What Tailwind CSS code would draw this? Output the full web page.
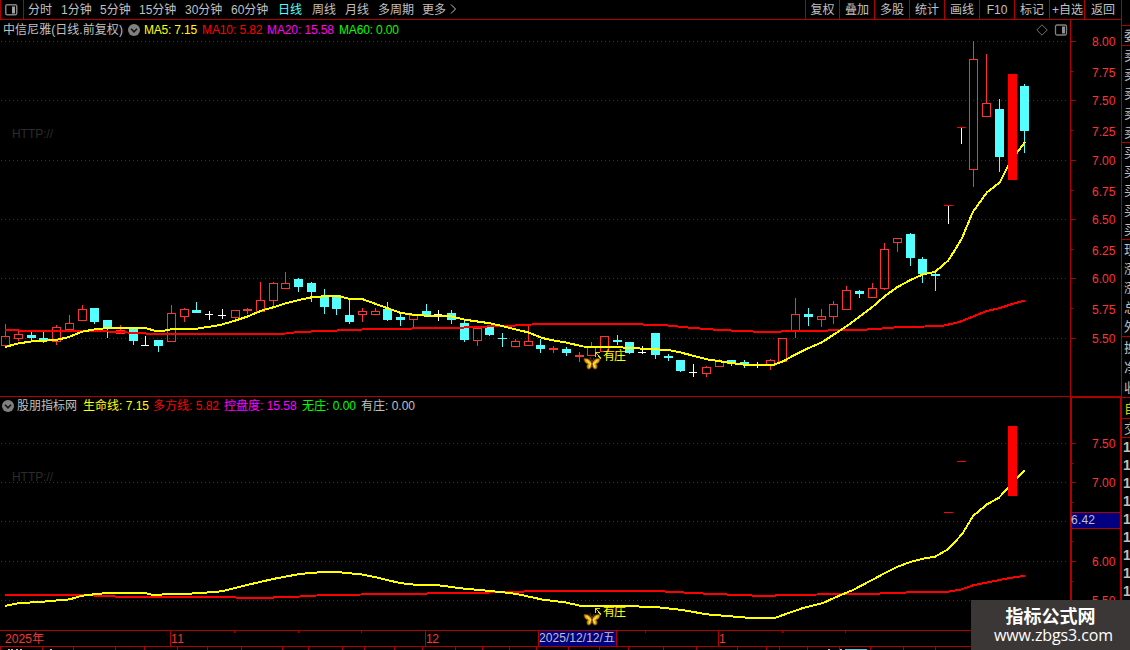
<!DOCTYPE html>
<html lang="zh-CN">
<head>
  <meta charset="UTF-8" />
  <meta name="viewport" content="width=device-width, initial-scale=1" />
  <title>中信尼雅 日线</title>
  <script src="https://cdn.jsdelivr.net/npm/@tailwindcss/browser@4"></script>
</head>
<body class="flex h-[650px] w-[1130px] overflow-hidden bg-black font-['Liberation_Sans','Noto_Sans_CJK_SC',sans-serif] text-[12px] leading-none text-[#c0c0c0]">

  <!-- Shared shapes -->
  <svg class="absolute h-0 w-0">
    <defs>
      <symbol id="collapse" viewBox="0 0 12 12">
        <circle cx="6" cy="6" r="6" fill="#808080" />
        <path d="M3 4.8 6 7.8 9 4.8" fill="none" stroke="#111" stroke-width="1.6" />
      </symbol>
      <g id="butterfly">
        <path d="M8 7C6 3 3 2 0 2.500c0 3 1.500 5 4 5.500-1.500 1-1.500 3.500 0 5 2 .5 3.500-1.500 4-4 .5 2.500 2 4.500 4 4 1.500-1.500 1.500-4 0-5 2.500-.5 4-2.500 4-5.500C13 2 10 3 8 7z" fill="#d9a010" stroke="#7a4308" stroke-width=".8" />
        <path d="M2.500 4 6.500 8 5 11.500M13.500 4l-4 4 1.500 3.500" fill="none" stroke="#ffe23c" stroke-width="1.300" />
        <path d="M8 6v5M8 6 6 1M8 6l2-4" fill="none" stroke="#5a3210" stroke-width="1" />
      </g>
      <path id="pointer" d="M.5 4.500V.5h4M.5.5l5.500 6" fill="none" stroke="#e0e000" stroke-width="1" shape-rendering="crispEdges" />
    </defs>
  </svg>

  <div class="flex w-[1121px] shrink-0 flex-col">

    <!-- Period toolbar -->
    <nav class="flex h-[20px] shrink-0 items-stretch justify-between border-b border-[#b00000] whitespace-nowrap">
      <div class="flex items-center">
        <div class="flex h-full w-[24px] items-center justify-center border-x border-[#b00000] pr-[2px]">
          <svg class="h-[12px] w-[13px]" viewBox="0 0 13 12">
            <rect x=".75" y=".75" width="11" height="10" rx="1.500" fill="none" stroke="#808080" stroke-width="1.500" />
            <rect x="7" y="2.500" width="3" height="7" fill="#a0a0a0" />
          </svg>
        </div>
        <span class="ml-[4px] w-[33px]">分时</span>
        <span class="w-[39px]">1分钟</span>
        <span class="w-[39px]">5分钟</span>
        <span class="w-[46px]">15分钟</span>
        <span class="w-[46px]">30分钟</span>
        <span class="w-[47px]">60分钟</span>
        <span class="w-[34px] text-[#54ffff]">日线</span>
        <span class="w-[33px]">周线</span>
        <span class="w-[33px]">月线</span>
        <span class="w-[44px]">多周期</span>
        <span class="w-[28px]">更多</span>
        <svg class="mb-[2px] h-[10px] w-[7px]" viewBox="0 0 7 10"><path d="M1 .5 5.500 5 1 9.500" fill="none" stroke="#c0c0c0" /></svg>
      </div>
      <div class="flex">
        <span class="flex w-[34px] items-center justify-center border-l border-[#b00000]">复权</span>
        <span class="flex w-[35px] items-center justify-center border-l border-[#b00000]">叠加</span>
        <span class="flex w-[35px] items-center justify-center border-l border-[#b00000]">多股</span>
        <span class="flex w-[35px] items-center justify-center border-l border-[#b00000]">统计</span>
        <span class="flex w-[35px] items-center justify-center border-l border-[#b00000]">画线</span>
        <span class="flex w-[35px] items-center justify-center border-l border-[#b00000]">F10</span>
        <span class="flex w-[35px] items-center justify-center border-l border-[#b00000]">标记</span>
        <span class="flex w-[35px] items-center justify-center border-l border-[#b00000] pl-[1px]">+自选</span>
        <span class="flex w-[37px] items-center justify-center border-l border-[#b00000]">返回</span>
      </div>
    </nav>

    <!-- Price panel -->
    <section class="flex h-[376px] shrink-0 flex-col">
      <header class="flex h-[19px] items-center whitespace-nowrap">
        <span class="w-[125px] pl-[3px] tracking-[0.05px]">中信尼雅(日线.前复权)</span>
        <svg class="ml-[3px] h-[12px] w-[12px]"><use href="#collapse" /></svg>
        <span class="ml-[4px] w-[58px] tracking-[-0.2px] text-[#ffff00]">MA5: 7.15</span>
        <span class="w-[65px] tracking-[-0.1px] text-[#ff0000]">MA10: 5.82</span>
        <span class="w-[72px] tracking-[-0.1px] text-[#ff00ff]">MA20: 15.58</span>
        <span class="tracking-[-0.15px] text-[#00ff00]">MA60: 0.00</span>
        <svg class="ml-auto h-[12px] w-[32px]" viewBox="0 0 32 12">
          <path d="M6 .8 11.200 6 6 11.200.8 6z" fill="none" stroke="#707070" />
          <rect x="19.500" y="1" width="11" height="10" rx="1.500" fill="none" stroke="#808080" stroke-width="1.300" />
          <rect x="26" y="2.500" width="3" height="7" fill="#909090" />
        </svg>
        <div class="w-[53px]"></div>
      </header>
      <svg id="price" class="h-[357px] w-[1121px] overflow-visible" viewBox="0 39 1121 357"></svg>
    </section>

    <!-- Indicator panel -->
    <section class="flex h-[234px] shrink-0 flex-col border-t border-[#b00000]">
      <header class="flex h-[17px] items-center whitespace-nowrap">
        <svg class="ml-[2px] h-[12px] w-[12px]"><use href="#collapse" /></svg>
        <span class="ml-[3px] w-[66px]">股朋指标网</span>
        <span class="w-[70px] text-[#ffff00]">生命线: 7.15</span>
        <span class="w-[71px] text-[#ff0000]">多方线: 5.82</span>
        <span class="w-[78px] text-[#ff00ff]">控盘度: 15.58</span>
        <span class="w-[59px] text-[#00ff00]">无庄: 0.00</span>
        <span>有庄: 0.00</span>
      </header>
      <svg id="indicator" class="h-[216px] w-[1121px] overflow-visible" viewBox="0 414 1121 216"></svg>
    </section>

    <!-- Time axis -->
    <svg id="timeline" class="h-[20px] w-[1121px] shrink-0" viewBox="0 630 1121 20"></svg>
  </div>

  <!-- Quote column, mostly off screen -->
  <aside class="relative flex w-[9px] shrink-0 flex-col overflow-hidden border-l border-[#b00000] text-[13px] whitespace-nowrap">
    <div class="h-[25px] shrink-0"></div>
    <div class="flex h-[20px] shrink-0 items-center border-t border-[#b00000] pl-[2px]">委</div>
    <div class="flex h-[97px] shrink-0 flex-col justify-around border-t border-[#b00000] pl-[2px]">
      <span>卖</span><span>卖</span><span>卖</span><span>卖</span><span>卖</span>
    </div>
    <div class="flex h-[97px] shrink-0 flex-col justify-around border-t border-[#b00000] pl-[2px]">
      <span>买</span><span>买</span><span>买</span><span>买</span><span>买</span>
    </div>
    <div class="flex h-[97px] shrink-0 flex-col justify-around border-t border-[#b00000] pl-[2px]">
      <span>现</span><span>涨</span><span>涨</span><span>总</span><span>外</span>
    </div>
    <div class="flex h-[61px] shrink-0 flex-col justify-around border-t border-[#b00000] pl-[2px]">
      <span>换</span><span>净</span><span>收</span>
    </div>
    <div class="flex h-[21px] shrink-0 items-center border-t border-[#b00000] pl-[2px] text-[#d0d000]">自</div>
    <div class="flex h-[19px] shrink-0 items-center border-t border-[#b00000] pl-[2px]">交</div>
    <div class="flex h-[163px] shrink-0 flex-col justify-around border-t border-[#b00000] pl-px text-[14px] font-bold">
      <span>1</span><span>1</span><span>1</span><span>1</span><span>1</span><span>1</span><span>1</span><span>1</span><span>1</span>
    </div>
  </aside>

  <!-- Site badge -->
  <div class="absolute top-[600px] left-[971px] flex h-[50px] w-[159px] flex-col items-center bg-[#3b3737] pt-[5px] whitespace-nowrap text-white">
    <div class="font-['Noto_Sans_CJK_SC',sans-serif] text-[18px] leading-[20px] font-bold">指标公式网</div>
    <svg class="h-[22px] w-[159px] font-['Open_Sans',sans-serif] text-[16px]" viewBox="0 0 159 22">
      <text x="23" y="16" textLength="119" fill="#fff">www.zbgs3.com</text>
    </svg>
  </div>

  <script>
    const RED = "#b00000", UP = "#ff3232", DOWN = "#54ffff", WHITE = "#ffffff";

    // [kind, high, bodyTop, bodyBottom, low]; u = up, d = down, w = unchanged, t = limit, s = signal
    const candles = [
      ["u",324,336,346,346],["u",331,334,339,341],["d",332,335,338,341],["d",332,338,340,343],
      ["u",325,327,342,345],["u",315,323,330,330],["u",305,309,321,321],["d",308,308,322,324],
      ["d",320,320,329,338],["u",325,330,334,334],["d",329,329,341,345],["w",336,345,346,346],
      ["d",340,340,346,352],["u",305,313,342,342],["u",308,309,317,322],["d",302,310,313,313],
      ["w",311,314,315,320],["w",309,315,316,319],["u",310,310,318,320],["u",308,309,311,314],
      ["u",282,300,312,312],["u",282,283,301,306],["u",272,283,289,289],["d",278,279,287,292],
      ["d",282,283,292,302],["d",289,296,307,314],["d",295,295,309,315],["d",299,315,322,324],
      ["u",308,311,315,322],["u",308,311,315,315],["d",302,309,320,321],["d",312,317,320,326],
      ["u",315,315,320,327],["d",304,311,315,315],["w",310,314,315,321],["d",310,313,320,324],
      ["d",320,323,340,342],["u",328,328,341,346],["d",326,326,335,336],["d",333,338,339,347],
      ["u",339,341,347,347],["u",326,341,346,346],["d",339,345,349,353],["u",346,348,350,353],
      ["d",347,349,353,356],["u",352,355,357,362],["u",342,347,356,356],["u",336,336,352,352],
      ["d",335,340,342,345],["d",342,342,353,354],["w",346,352,353,354],["d",333,333,355,359],
      ["d",354,356,358,361],["d",360,360,371,372],["w",364,372,373,377],["u",366,367,374,377],
      ["u",359,361,367,367],["d",360,360,364,366],["d",360,362,364,368],["w",362,364,365,368],
      ["u",359,360,366,370],["u",338,338,362,362],["u",298,314,331,338],["d",308,314,317,326],
      ["u",309,316,320,327],["u",301,304,317,324],["u",286,290,310,310],["d",290,291,294,298],
      ["u",283,288,298,298],["u",243,249,289,290],["u",238,238,243,252],["d",233,234,258,266],
      ["d",257,259,274,283],["d",273,274,276,291],["t",206,205,206,224],["t",128,127,128,144],
      ["u",41,59,170,187],["u",54,103,117,117],["d",99,109,157,172],["s",74,74,180,180],
      ["d",84,86,131,153]
    ];

    const ma5 = "5,347 18,343.500 31,341.500 56,340 69,337 82,331.700 94,329.500 107,328 145,328 155,330.700 164,330.700 173,329 197,328.700 220,325 235,320.700 247,316.700 263,310 272,307.700 286,303.300 300,299.700 313,297 330,296 338,296 349,298.700 362,299 375,303.700 387,308 400,312.700 413,314.700 427,315.700 450,316 465,319.700 490,323.300 502,326 515,329.300 528,332.300 542,338 553,340.300 565,342.300 583,346.500 615,347 643,348.700 668,350 680,352.300 693,355.700 707,359.300 720,361.300 735,363.500 747,365 773,365 783,361.300 795,354.700 808,348.300 822,342.300 833,335 847,326 859,317 872,307.300 885,296 897,287.300 910,280.300 923,274.300 935,272 948,260.700 955,250 962,238 973,211.700 987,192.300 1000,182.300 1008,166 1017,152.700 1025,142";
    const ma10 = "5,330 18,330 20,331 107,331 109,332 145,333 147,334 260,334 286,333.500 298,332 325,331 350,330 375,329 427,328.300 463,328 465,327 510,326 515,325.500 540,324 630,324 668,325.500 693,328 720,330 757,331.700 780,331.700 785,331 846,330.300 872,329.300 897,327.300 942,326 953,323.500 960,321.700 980,313.700 987,311 1000,308 1012,304 1025,300.500";
    const life = "5,606 18,603.300 43,601.700 70,599.300 82,595.700 97,594 108,593 145,593 152,594.700 172,594.300 197,593.300 222,591.300 235,588 247,585 260,582 273,579 286,576.500 300,574 313,572.700 327,572 340,572.300 362,574.500 375,577 387,580 400,583 413,584.500 440,585.500 463,588.500 490,591 510,593 520,594.700 543,599.700 565,602.300 580,605.700 653,606.700 680,609.700 707,614.300 747,617.700 775,618 783,615 803,608 823,603 840,595.300 853,590 872,580 885,573 897,567 910,562 923,558.700 935,556.700 948,549.300 962,534.300 973,516 987,504.300 999,497.700 1008,487.700 1017,478 1025,470.300";
    const bull = "5,595 93,595 96,596 133,597 235,597 237,598 272,598 275,597 300,596.500 325,595 375,594.300 440,593.300 520,592 528,591 655,591 707,593.700 757,595.700 795,595.300 797,594.700 870,594 897,592.700 930,592 948,591.700 962,589.300 973,585.300 990,582 1008,578.300 1025,575.700";

    const rect = (x, y, w, h, fill) => `<rect x="${x}" y="${y}" width="${w}" height="${h}" fill="${fill}"/>`;
    const text = (x, y, s, len, fill) => `<text x="${x}" y="${y}" textLength="${len}" fill="${fill}">${s}</text>`;
    const line = (pts, color) => `<polyline points="${pts}" fill="none" stroke="${color}" stroke-width="2" stroke-linejoin="round" shape-rendering="crispEdges"/>`;
    const grid = y => `<path d="M1 ${y + .5}H1068" stroke="${RED}" stroke-dasharray="1 3"/>`;

    function candle([kind, high, top, bottom, low], i) {
      const x = Math.round(5.2 + i * 12.74);
      if (kind === "s") return rect(x - 4, top, 9, bottom - top, "#ff0000");
      if (kind === "t") return rect(x - 4, top, 9, 1, "#ff0000") + rect(x, high, 1, low - high, WHITE);
      if (kind === "u") {
        return rect(x, high, 1, top - high, UP) + rect(x, bottom, 1, low - bottom, UP) +
          `<rect x="${x - 3.5}" y="${top + .5}" width="8" height="${bottom - top - 1}" fill="none" stroke="${UP}"/>`;
      }
      const color = kind === "d" ? DOWN : WHITE;
      return rect(x, high, 1, low - high, color) + rect(x - 4, top, kind === "d" ? 9 : 8, bottom - top, color);
    }

    function marker(y) {
      return `<use href="#butterfly" x="584" y="${y + 6}"/><use href="#pointer" x="595" y="${y + 2}"/>` + text(603, y + 10, "有庄", 23, "#ffff00");
    }

    // Price chart
    let out = [41, 100, 160, 219, 278, 338].map(grid).join("");
    out += text(12, 138, "HTTP://", 41, "#2c2c2c");
    out += rect(1070, 20, 1, 376, RED);
    [41, 100, 160, 219, 278, 338].forEach(y => out += rect(1071, y, 5, 1, RED));
    [71, 130, 190, 249, 308].forEach(y => out += rect(1071, y, 2, 1, RED));
    [["8.00",46],["7.75",77],["7.50",105],["7.25",136],["7.00",165],["6.75",196],["6.50",224],["6.25",255],["6.00",283],["5.75",314],["5.50",343]]
      .forEach(([s, y]) => out += text(1092, y, s, 23.5, UP));
    out += candles.map(candle).join("") + line(ma10, "#ff0000") + line(ma5, "#ffff00");
    out += candle(candles[79], 79) + marker(350);
    document.getElementById("price").innerHTML = out;

    // Indicator chart
    out = [443, 482, 521, 561, 600].map(grid).join("");
    out += text(12, 481, "HTTP://", 41, "#2c2c2c");
    out += rect(1070, 396, 2, 234, RED) + rect(1120, 396, 2, 234, RED) + rect(1070, 396, 52, 2, RED);
    [443, 482, 561, 600].forEach(y => out += rect(1072, y, 4, 1, RED));
    [463, 502, 541, 581].forEach(y => out += rect(1072, y, 1, 1, RED));
    [["7.50",448],["7.00",487],["6.00",566],["5.50",605]].forEach(([s, y]) => out += text(1092, y, s, 23.5, UP));
    out += rect(1072, 512, 48, 17, "#000080") + rect(1072, 512, 48, 1, RED) + rect(1072, 528, 48, 1, RED);
    out += text(1071, 524, "6.42", 24, "#c0c0c0");
    out += line(bull, "#ff0000") + line(life, "#ffff00");
    out += rect(944, 512, 9, 1, "#ff0000") + rect(957, 461, 9, 1, "#ff0000") + rect(1008, 426, 9, 70, "#ff0000");
    out += marker(606);
    document.getElementById("indicator").innerHTML = out;

    // Time axis
    out = rect(0, 630, 1121, 1, RED) + rect(0, 646, 1121, 1, RED);
    [170, 425, 718].forEach(x => out += rect(x, 630, 1, 17, RED));
    [234, 298, 361, 645, 782, 845].forEach(x => out += rect(x, 631, 1, 2, RED));
    [0, 42, 73, 115, 144, 177, 207, 241, 282, 308, 342, 364, 394, 422, 455, 482, 509, 536, 568, 599, 628, 663, 696, 737, 766, 779, 807, 839, 870, 903, 935]
      .forEach(x => out += rect(x, 647, 1, 3, RED));
    out += rect(538, 630, 79, 17, RED) + rect(539, 631, 77, 15, "#000080");
    out += text(5, 643, "2025年", 39, UP) + text(171, 643, "11", 13, UP) + text(426, 643, "12", 13, UP) + text(719, 643, "1", 7, UP);
    out += text(539, 642, "2025/12/12/五", 76, "#c0c0c0");
    [8, 11, 16, 20, 50, 828, 840].forEach(x => out += rect(x, 649, 2, 1, "#c0c0c0"));
    out += rect(845, 649, 22, 1, "#54c8c8");
    document.getElementById("timeline").innerHTML = out;
  </script>
</body>
</html>
